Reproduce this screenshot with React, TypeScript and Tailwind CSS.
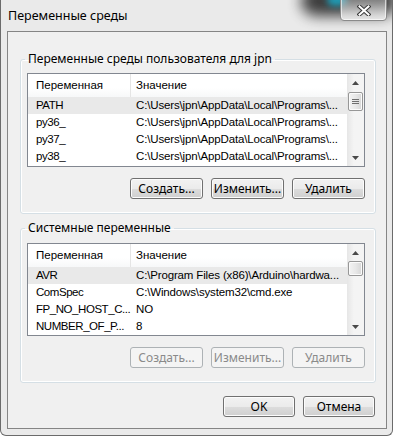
import React from 'react';

type Row = { name: string; value: string };

const userVars: Row[] = [
  { name: 'PATH', value: 'C:\\Users\\jpn\\AppData\\Local\\Programs\\...' },
  { name: 'py36_', value: 'C:\\Users\\jpn\\AppData\\Local\\Programs\\...' },
  { name: 'py37_', value: 'C:\\Users\\jpn\\AppData\\Local\\Programs\\...' },
  { name: 'py38_', value: 'C:\\Users\\jpn\\AppData\\Local\\Programs\\...' },
];

const sysVars: Row[] = [
  { name: 'AVR', value: 'C:\\Program Files (x86)\\Arduino\\hardwa...' },
  { name: 'ComSpec', value: 'C:\\Windows\\system32\\cmd.exe' },
  { name: 'FP_NO_HOST_C...', value: 'NO' },
  { name: 'NUMBER_OF_P...', value: '8' },
];

// маленькие стрелки полосы прокрутки
const Arrow = ({ up }: { up?: boolean }) => (
  <svg width="7" height="4" viewBox="0 0 7 4">
    {up ? <polygon points="0,4 7,4 3.5,0" fill="#4a4a4a" /> : <polygon points="0,0 7,0 3.5,4" fill="#4a4a4a" />}
  </svg>
);

const ScrollBar = ({ thumbTop, thumbHeight, grip }: { thumbTop: number; thumbHeight: number; grip?: boolean }) => (
  <div className="w-[17px] shrink-0 h-full flex flex-col bg-[linear-gradient(to_right,#e6e6e6,#f4f4f4_40%,#f4f4f4)]">
    <div className="h-[17px] flex items-center justify-center">
      <Arrow up />
    </div>
    <div className="flex-1">
      <div
        className="mx-[1px] rounded-[2px] border border-[#979797] bg-[linear-gradient(to_right,#f3f3f3,#e8e8e8_50%,#d6d6d6)] shadow-[inset_0_0_0_1px_#fbfbfb] flex flex-col items-center justify-center gap-[1px]"
        style={{ marginTop: thumbTop, height: thumbHeight }}
      >
        {grip && (
          <>
            <div className="w-[7px] h-[1px] bg-[#6f6f6f]" />
            <div className="w-[7px] h-[1px] bg-[#6f6f6f]" />
            <div className="w-[7px] h-[1px] bg-[#6f6f6f]" />
          </>
        )}
      </div>
    </div>
    <div className="h-[17px] flex items-center justify-center">
      <Arrow />
    </div>
  </div>
);

const ListView = ({ rows, height, thumbTop, thumbHeight, grip }: { rows: Row[]; height: string; thumbTop: number; thumbHeight: number; grip?: boolean }) => (
  <div className={`border border-[#828790] bg-white flex overflow-hidden min-w-0 text-[11.5px] font-['Liberation_Sans',Arial,sans-serif] ${height}`}>
    <div className="flex-1 min-w-0 flex flex-col overflow-hidden">
      <div className="h-[23px] flex shrink-0 bg-[linear-gradient(to_bottom,#ffffff,#ffffff_60%,#f7f8f9)]">
        <div className="w-[103px] shrink-0 border-r border-[#e5e5e5] pl-[8px] flex items-center">Переменная</div>
        <div className="flex-1 min-w-0 pl-[5px] flex items-center">Значение</div>
      </div>
      {rows.map((r, i) => (
        <div key={r.name} className={`h-[17px] flex shrink-0 items-center pt-[1px] ${i === 0 ? 'bg-[#e9e9e9]' : ''}`}>
          <div className="w-[103px] shrink-0 pl-[8px] whitespace-nowrap overflow-hidden tracking-[-0.45px]">{r.name}</div>
          <div className="flex-1 min-w-0 pl-[5px] whitespace-nowrap overflow-hidden tracking-[-0.15px]">{r.value}</div>
        </div>
      ))}
    </div>
    <ScrollBar thumbTop={thumbTop} thumbHeight={thumbHeight} grip={grip} />
  </div>
);

const Button = ({ children, disabled, w = 'w-[73px]' }: { children: React.ReactNode; disabled?: boolean; w?: string }) => (
  <div
    className={
      disabled
        ? `${w} h-[21px] rounded-[3px] border border-[#adb2b5] bg-[#f4f4f4] text-[#8a8a8a] flex items-center justify-center`
        : `${w} h-[21px] rounded-[3px] border border-[#707070] bg-[linear-gradient(to_bottom,#f2f2f2_0%,#ebebeb_50%,#dddddd_50%,#cfcfcf_100%)] shadow-[inset_0_0_0_1px_#fcfcfc] flex items-center justify-center`
    }
  >
    {children}
  </div>
);

const GroupBox = ({ title, children, className }: { title: string; children: React.ReactNode; className?: string }) => (
  <fieldset className={`min-w-0 border border-[#d5dfe5] rounded-[3px] shadow-[inset_0_0_0_1px_#ffffff] pl-[6px] pr-[10px] pb-[14px] ${className ?? ''}`}>
    <legend className="ml-[-2px] px-[3px] leading-[16px]">{title}</legend>
    {children}
  </fieldset>
);

export default function App() {
  return (
    <div className="w-[393px] h-[437px] bg-white text-[12px] text-black font-['Segoe_UI','Noto_Sans',sans-serif]">
      <div className="relative h-[436px] bg-[#eaeaea] border-x border-b border-[#6b6b6b] rounded-b-[6px] flex flex-col overflow-hidden">
        {/* стекло за кнопкой закрытия */}
        <div className="absolute left-[300px] top-[-14px] w-[96px] h-[30px] rounded-full bg-[#1e1e1e] opacity-85 blur-[7px]" />
        <div className="absolute left-[326px] top-[-6px] w-[20px] h-[12px] rounded-full bg-[#1f9ab3] blur-[3px]" />
        <div className="absolute right-[5px] top-[-4px] w-[47px] h-[25px] rounded-b-[4px] border border-[#8a8a8a] bg-[linear-gradient(to_bottom,rgba(200,200,200,0.4),rgba(235,235,235,0.9))] shadow-[inset_0_0_0_1px_rgba(255,255,255,0.6)] flex items-center justify-center pt-[3px]">
          <svg width="14" height="11" viewBox="0 0 14 11">
            <path d="M2.5 1.5 L11.5 9.5 M11.5 1.5 L2.5 9.5" stroke="#3a3a3a" strokeWidth="4" strokeLinecap="square" />
            <path d="M2.5 1.5 L11.5 9.5 M11.5 1.5 L2.5 9.5" stroke="#ffffff" strokeWidth="2" strokeLinecap="square" />
          </svg>
        </div>

        <div className="h-[31px] shrink-0 flex items-center pl-[7px] pt-[2px] text-[12.5px]">Переменные среды</div>

        <div className="ml-[6px] mr-[5px] mb-[6px] flex-1 min-w-0 border border-[#858585] bg-[#f0f0f0] pt-[19px] pl-[12px] pr-[10px] flex flex-col">
          <GroupBox title="Переменные среды пользователя для jpn">
            <div className="pt-[6px]">
              <ListView rows={userVars} height="h-[94px]" thumbTop={1} thumbHeight={19} grip />
            </div>
            <div className="mt-[11px] flex justify-end gap-[8px]">
              <Button>Создать...</Button>
              <Button>Изменить...</Button>
              <Button>Удалить</Button>
            </div>
          </GroupBox>

          <GroupBox title="Системные переменные" className="mt-[6px]">
            <div className="pt-[7px]">
              <ListView rows={sysVars} height="h-[93px]" thumbTop={0} thumbHeight={15} />
            </div>
            <div className="mt-[11px] flex justify-end gap-[8px]">
              <Button disabled>Создать...</Button>
              <Button disabled>Изменить...</Button>
              <Button disabled>Удалить</Button>
            </div>
          </GroupBox>

          <div className="mt-[13px] flex justify-end gap-[8px] pr-[1px]">
            <Button w="w-[72px]">OK</Button>
            <Button w="w-[72px]">Отмена</Button>
          </div>
        </div>
      </div>
    </div>
  );
}
